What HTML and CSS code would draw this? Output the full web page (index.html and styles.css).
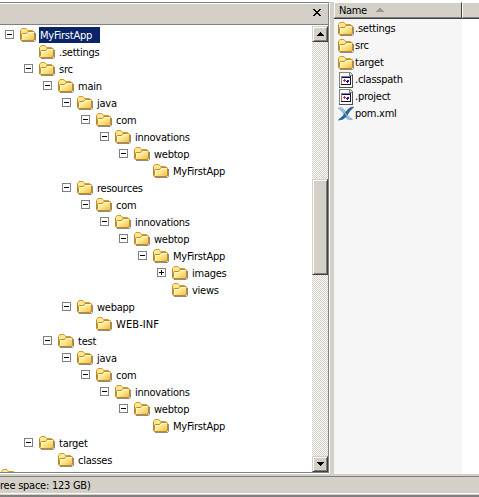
FILE: index.html
```html
<!DOCTYPE html>
<html lang="en">
<head>
<meta charset="utf-8">
<title>MyFirstApp</title>
<link rel="stylesheet" href="styles.css">
</head>
<body>
<svg class="defs" width="0" height="0">
  <defs>
    <linearGradient id="face" x1="0" y1="0" x2="1" y2="1"><stop offset="0" stop-color="#fff6b5"/><stop offset=".5" stop-color="#ffe88c"/><stop offset="1" stop-color="#f0b840"/></linearGradient>
    <symbol id="folder" viewBox="0 0 16 16">
      <path d="M2 14.5H14.5L15.5 13.5V6" fill="none" stroke="#8c8c8c"/>
      <path d="M.5 12V3.5L2 1.5H6L7.5 3.5H12.5L13.5 4.5V12Z" fill="#ffe78c" stroke="#d09c38"/>
      <path d="M1.5 12V7.5Q1.5 6.5 2.5 6.5H6.5L8 4.5H13.5Q14.5 4.5 14.5 5.5V12Q14.5 13.5 13 13.5H2Q.5 13.5 .5 12V4" fill="url(#face)" stroke="#bd8a24"/>
      <path d="M2.5 12V7.5H7L8.5 5.5H13.5" fill="none" stroke="#fffbd8"/>
    </symbol>
    <symbol id="file" viewBox="0 0 16 16" shape-rendering="crispEdges">
      <path d="M1 0H12L15 3V16H1Z" fill="#808080"/>
      <path d="M2 1H11V4H14V15H2Z" fill="#fff"/>
      <path d="M12 1H13V2H14V3H12Z" fill="#d8d8d8"/>
      <path d="M14 3H15V16H1V15H14Z" fill="#505050"/>
      <path d="M3 4H13V13H3Z" fill="#808080"/>
      <path d="M4 5H12V6H4Z" fill="#000080"/>
      <path d="M4 6H12V12H4Z" fill="#fff"/>
      <path d="M12 4H13V13H3V12H12Z" fill="#101020"/>
      <path d="M5 8H6V7H7V8H8V9H7V10H6V9H5Z" fill="#e02020"/>
      <path d="M9 8H11V10H10V11H9V10H8V9H9Z" fill="#1010d0"/>
    </symbol>
    <symbol id="xml" viewBox="0 0 16 16">
      <path d="M.5 2Q4.500 .5 7 5Q9.500 10.500 14.500 13.500Q10 15 7.500 11Q5 5.500 .5 2Z" fill="#8fb4d2" stroke="#8fb4d2"/>
      <path d="M15.500 1Q11 1 8 6Q5.500 10.500 .5 14Q5.500 14 8.500 10Q11 5 15.500 1Z" fill="#2b6795" stroke="#2b6795"/>
      <path d="M2 2.500Q5 3 7 7Q9 11 13 13" fill="none" stroke="#a9c7df"/>
    </symbol>
    <symbol id="minus" viewBox="0 0 9 9" shape-rendering="crispEdges"><path d="M.5 .5H8.5V8.5H.5Z" fill="#fff" stroke="#808080"/><path d="M2 4H7V5H2Z"/></symbol>
    <symbol id="plus" viewBox="0 0 9 9" shape-rendering="crispEdges"><path d="M.5 .5H8.5V8.5H.5Z" fill="#fff" stroke="#808080"/><path d="M2 4H7V5H2ZM4 2H5V7H4Z"/></symbol>
  </defs>
</svg>
<div class="window">
  <div class="panes">
    <section class="left">
      <header class="bar"><svg class="close" viewBox="0 0 8 7" shape-rendering="crispEdges"><path d="M0 0H2V1H3V2H5V1H6V0H8V1H7V2H6V3H5V4H6V5H7V6H8V7H6V6H5V5H3V6H2V7H0V6H1V5H2V4H3V3H2V2H1V1H0Z"/></svg></header>
      <div class="content">
        <div class="tree">
          <div class="row l0"><svg class="tog"><use href="#minus"/></svg><svg class="icon"><use href="#folder"/></svg><span class="label selected">MyFirstApp</span></div>
          <div class="row l1"><i class="tog"></i><svg class="icon"><use href="#folder"/></svg><span class="label">.settings</span></div>
          <div class="row l1"><svg class="tog"><use href="#minus"/></svg><svg class="icon"><use href="#folder"/></svg><span class="label">src</span></div>
          <div class="row l2"><svg class="tog"><use href="#minus"/></svg><svg class="icon"><use href="#folder"/></svg><span class="label">main</span></div>
          <div class="row l3"><svg class="tog"><use href="#minus"/></svg><svg class="icon"><use href="#folder"/></svg><span class="label">java</span></div>
          <div class="row l4"><svg class="tog"><use href="#minus"/></svg><svg class="icon"><use href="#folder"/></svg><span class="label">com</span></div>
          <div class="row l5"><svg class="tog"><use href="#minus"/></svg><svg class="icon"><use href="#folder"/></svg><span class="label">innovations</span></div>
          <div class="row l6"><svg class="tog"><use href="#minus"/></svg><svg class="icon"><use href="#folder"/></svg><span class="label">webtop</span></div>
          <div class="row l7"><i class="tog"></i><svg class="icon"><use href="#folder"/></svg><span class="label">MyFirstApp</span></div>
          <div class="row l3"><svg class="tog"><use href="#minus"/></svg><svg class="icon"><use href="#folder"/></svg><span class="label">resources</span></div>
          <div class="row l4"><svg class="tog"><use href="#minus"/></svg><svg class="icon"><use href="#folder"/></svg><span class="label">com</span></div>
          <div class="row l5"><svg class="tog"><use href="#minus"/></svg><svg class="icon"><use href="#folder"/></svg><span class="label">innovations</span></div>
          <div class="row l6"><svg class="tog"><use href="#minus"/></svg><svg class="icon"><use href="#folder"/></svg><span class="label">webtop</span></div>
          <div class="row l7"><svg class="tog"><use href="#minus"/></svg><svg class="icon"><use href="#folder"/></svg><span class="label">MyFirstApp</span></div>
          <div class="row l8"><svg class="tog"><use href="#plus"/></svg><svg class="icon"><use href="#folder"/></svg><span class="label">images</span></div>
          <div class="row l8"><i class="tog"></i><svg class="icon"><use href="#folder"/></svg><span class="label">views</span></div>
          <div class="row l3"><svg class="tog"><use href="#minus"/></svg><svg class="icon"><use href="#folder"/></svg><span class="label">webapp</span></div>
          <div class="row l4"><i class="tog"></i><svg class="icon"><use href="#folder"/></svg><span class="label caps">WEB-INF</span></div>
          <div class="row l2"><svg class="tog"><use href="#minus"/></svg><svg class="icon"><use href="#folder"/></svg><span class="label">test</span></div>
          <div class="row l3"><svg class="tog"><use href="#minus"/></svg><svg class="icon"><use href="#folder"/></svg><span class="label">java</span></div>
          <div class="row l4"><svg class="tog"><use href="#minus"/></svg><svg class="icon"><use href="#folder"/></svg><span class="label">com</span></div>
          <div class="row l5"><svg class="tog"><use href="#minus"/></svg><svg class="icon"><use href="#folder"/></svg><span class="label">innovations</span></div>
          <div class="row l6"><svg class="tog"><use href="#minus"/></svg><svg class="icon"><use href="#folder"/></svg><span class="label">webtop</span></div>
          <div class="row l7"><i class="tog"></i><svg class="icon"><use href="#folder"/></svg><span class="label">MyFirstApp</span></div>
          <div class="row l1"><svg class="tog"><use href="#minus"/></svg><svg class="icon"><use href="#folder"/></svg><span class="label">target</span></div>
          <div class="row l2"><i class="tog"></i><svg class="icon"><use href="#folder"/></svg><span class="label">classes</span></div>
          <div class="row parent"><svg class="icon"><use href="#folder"/></svg></div>
        </div>
        <div class="scroll">
          <div class="btn"><svg viewBox="0 0 7 4" shape-rendering="crispEdges"><path d="M3 0H4V1H5V2H6V3H7V4H0V3H1V2H2V1H3Z"/></svg></div>
          <div class="track above"></div>
          <div class="btn thumb"></div>
          <div class="track below"></div>
          <div class="btn"><svg viewBox="0 0 7 4" shape-rendering="crispEdges"><path d="M0 0H7V1H6V2H5V3H4V4H3V3H2V2H1V1H0Z"/></svg></div>
        </div>
      </div>
    </section>
    <section class="right">
      <header class="cols"><div class="col name"><span>Name</span><svg viewBox="0 0 8 4" shape-rendering="crispEdges"><path d="M3 0H5V1H6V2H7V3H8V4H0V3H1V2H2V1H3Z" fill="#999"/></svg></div><div class="col rest"></div></header>
      <div class="files">
        <div class="frow"><svg class="icon"><use href="#folder"/></svg><span>.settings</span></div>
        <div class="frow"><svg class="icon"><use href="#folder"/></svg><span>src</span></div>
        <div class="frow"><svg class="icon"><use href="#folder"/></svg><span>target</span></div>
        <div class="frow"><svg class="icon"><use href="#file"/></svg><span>.classpath</span></div>
        <div class="frow"><svg class="icon"><use href="#file"/></svg><span>.project</span></div>
        <div class="frow"><svg class="icon"><use href="#xml"/></svg><span>pom.xml</span></div>
      </div>
    </section>
  </div>
  <footer class="status"><span>ree space: 123 GB)</span></footer>
</div>
</body>
</html>
```
FILE: styles.css
```css
* { box-sizing: border-box; }
body { margin: 0; background: #fff; color: #000; font: 11px/16px "DejaVu Sans Condensed", "DejaVu Sans", sans-serif; font-stretch: condensed; letter-spacing: -.25px; overflow: hidden; }
svg { display: block; flex: none; }
.defs { position: absolute; }
.window { width: 479px; height: 497px; display: flex; flex-direction: column; padding-top: 2px; overflow: hidden; }
.panes { height: 472px; display: flex; background: #d4d0c8; }
.left { width: 330px; height: 472px; display: flex; flex-direction: column; border-top: 1px solid #808080; border-right: 1px solid #fff; border-bottom: 1px solid #fff; }
.bar { height: 22px; flex: none; background: #d4d0c8; border-top: 1px solid #fff; border-right: 1px solid #808080; border-bottom: 1px solid #808080; display: flex; justify-content: flex-end; padding: 5px 7px 0 0; }
.close { width: 8px; height: 7px; }
.content { flex: 1; min-height: 0; display: flex; background: #fff; border-right: 1px solid #808080; border-bottom: 1px solid #808080; padding-top: 1px; }
.tree { flex: 1; overflow: hidden; }
.row { height: 17px; display: flex; align-items: center; white-space: nowrap; }
.tog { width: 9px; height: 9px; margin-right: 6px; flex: none; }
.icon { width: 16px; height: 16px; }
.label { height: 16px; line-height: 17px; margin-left: 3px; padding: 0 1px; }
.selected { width: 61px; background: #0a246a; color: #fff; }
.caps { letter-spacing: .1px; }
.l0 { padding-left: 5px; }
.l1 { padding-left: 24px; }
.l2 { padding-left: 43px; }
.l3 { padding-left: 62px; }
.l4 { padding-left: 81px; }
.l5 { padding-left: 100px; }
.l6 { padding-left: 119px; }
.l7 { padding-left: 138px; }
.l8 { padding-left: 157px; }
.parent { padding-left: 1px; align-items: flex-start; }
.scroll { width: 16px; display: flex; flex-direction: column; }
.btn { height: 16px; flex: none; background: #d4d0c8; border: 1px solid; border-color: #d4d0c8 #404040 #404040 #d4d0c8; box-shadow: inset 1px 1px #fff, inset -1px -1px #808080; display: flex; align-items: center; justify-content: center; }
.btn svg { width: 7px; height: 4px; }
.thumb { height: 96px; }
.track { background: repeating-conic-gradient(#d4d0c8 0 25%, #fff 0 50%) 0 0 / 2px 2px; }
.above { height: 137px; }
.below { flex: 1; }
.right { flex: 1; margin-left: 4px; display: flex; flex-direction: column; }
.cols { height: 17px; display: flex; border-bottom: 1px solid #404040; }
.col { background: #d4d0c8; border: 1px solid; border-color: #fff #808080 #808080 #fff; }
.name { width: 128px; display: flex; align-items: center; padding-left: 4px; line-height: 14px; border-right-color: #404040; }
.name span { padding-top: 2px; letter-spacing: -.4px; }
.name svg { width: 8px; height: 4px; margin-left: 9px; }
.rest { flex: 1; border-right: 0; }
.files { flex: 1; padding: 1px 0 0 4px; background: linear-gradient(90deg, #f6f6f6 128px, #fff 128px); }
.frow { height: 17px; display: flex; align-items: center; }
.frow span { margin-left: 1px; }
.status { height: 23px; background: #d4d0c8; padding-top: 2px; }
.status span { display: block; height: 18px; line-height: 17px; border-top: 1px solid #808080; border-bottom: 1px solid #fff; }
.status::after { content: ""; display: block; height: 2px; margin-top: 1px; background: #808080; }
```
